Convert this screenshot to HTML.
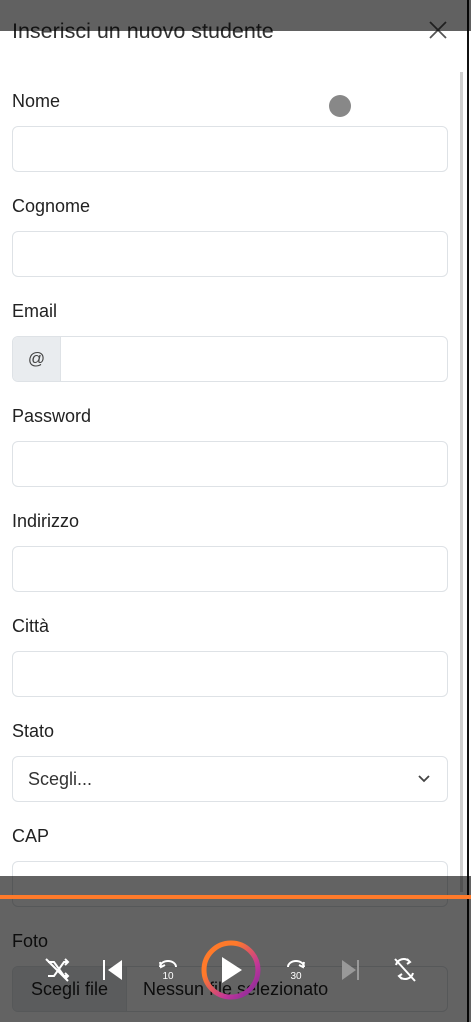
<!DOCTYPE html>
<html><head><meta charset="utf-8"><style>
*{box-sizing:border-box;margin:0;padding:0}
body{width:471px;height:1022px;overflow:hidden;background:#fff;font-family:"Liberation Sans",sans-serif;position:relative;color:#212529}
.title{position:absolute;left:12px;top:19px;font-size:21.5px;color:#333}
.close{position:absolute;left:428px;top:20px}
.lbl{position:absolute;left:12px;font-size:18px;color:#222}
.inp{position:absolute;left:12px;width:436px;height:46px;border:1px solid #dee2e6;border-radius:6px;background:#fff}
.topbar{position:absolute;left:0;top:0;width:471px;height:31px;background:rgba(0,0,0,0.62)}
.bot{position:absolute;left:0;top:876px;width:471px;height:146px;background:rgba(0,0,0,0.61)}
.line{position:absolute;left:0;top:895px;width:471px;height:4px;background:#ff7a2a}
.sb{position:absolute;left:460px;top:72px;width:3px;height:820px;background:#d0d0d0}
.edge{position:absolute;left:467px;top:0;width:2px;height:1022px;background:#111}
</style></head><body>
<div class="title">Inserisci un nuovo studente</div>
<svg class="close" width="20" height="20" viewBox="0 0 20 20"><path d="M2 2L18 18M18 2L2 18" stroke="#555" stroke-width="1.8"/></svg>
<div style="position:absolute;left:329px;top:95px;width:22px;height:22px;border-radius:50%;background:#888"></div>

<div class="lbl" style="top:91px">Nome</div><div class="inp" style="top:126px"></div>
<div class="lbl" style="top:196px">Cognome</div><div class="inp" style="top:231px"></div>
<div class="lbl" style="top:301px">Email</div>
<div class="inp" style="top:336px;overflow:hidden"><div style="position:absolute;left:0;top:0;width:48px;height:44px;background:#e9ecef;border-right:1px solid #dee2e6;font-size:17px;text-align:center;line-height:44px;color:#444">@</div></div>
<div class="lbl" style="top:406px">Password</div><div class="inp" style="top:441px"></div>
<div class="lbl" style="top:511px">Indirizzo</div><div class="inp" style="top:546px"></div>
<div class="lbl" style="top:616px">Città</div><div class="inp" style="top:651px"></div>
<div class="lbl" style="top:721px">Stato</div>
<div class="inp" style="top:756px"><span style="position:absolute;left:15px;top:12px;font-size:18px;color:#333">Scegli...</span>
<svg style="position:absolute;left:404px;top:17px" width="14" height="10" viewBox="0 0 14 10"><path d="M2 2L7 7L12 2" stroke="#444" stroke-width="1.8" fill="none"/></svg></div>
<div class="lbl" style="top:826px">CAP</div><div class="inp" style="top:861px"></div>
<div class="lbl" style="top:931px">Foto</div>
<div class="inp" style="top:966px;overflow:hidden"><div style="position:absolute;left:0;top:0;width:114px;height:44px;background:#e9ecef;border-right:1px solid #dee2e6;font-size:18px;text-align:center;line-height:44px;color:#222">Scegli file</div><span style="position:absolute;left:130px;top:12px;font-size:18px;color:#222">Nessun file selezionato</span></div>

<div class="sb"></div>
<div class="edge"></div>
<div class="topbar"></div>
<div class="bot"></div>
<div class="line"></div>

<svg style="position:absolute;left:0;top:935px" width="471" height="70" viewBox="0 0 471 70">
<defs><linearGradient id="g" x1="0" y1="0" x2="1" y2="1"><stop offset="0.3" stop-color="#ff7a2a"/><stop offset="0.7" stop-color="#c0359a"/><stop offset="1" stop-color="#7a2a9a"/></linearGradient></defs>
<g stroke="#fff" stroke-width="2" fill="none">
<path d="M48 27h6l10 14h4M48 41h6l10-14h4M65 24l3 3-3 3M65 38l3 3-3 3M46 24l22 22"/>
<path d="M160 32a8 6 0 1 1 16 0M160 27l1 5 4-2"/>
<path d="M304 32a8 6 0 1 0 -16 0M304 27l-1 5-4-2"/>
<path d="M396 30a8 8 0 0 1 13-4M413 38a8 8 0 0 1 -13 4M407 24l3 3-3 2M402 44l-3-3 3-2M395 24l20 22"/>
</g>
<path d="M104 25v20" stroke="#fff" stroke-width="2"/><path d="M122 25v20l-14-10z" fill="#fff"/>
<path d="M342 25v20l14-10z" fill="#999"/><path d="M358 25v20" stroke="#999" stroke-width="2"/>
<text x="168" y="44" fill="#fff" font-size="10" font-family="Liberation Sans" text-anchor="middle">10</text>
<text x="296" y="44" fill="#fff" font-size="10" font-family="Liberation Sans" text-anchor="middle">30</text>
<circle cx="231" cy="35" r="27" stroke="url(#g)" stroke-width="5" fill="none"/>
<path d="M222 22v26l20-13z" fill="#fff"/>
</svg>
</body></html>
